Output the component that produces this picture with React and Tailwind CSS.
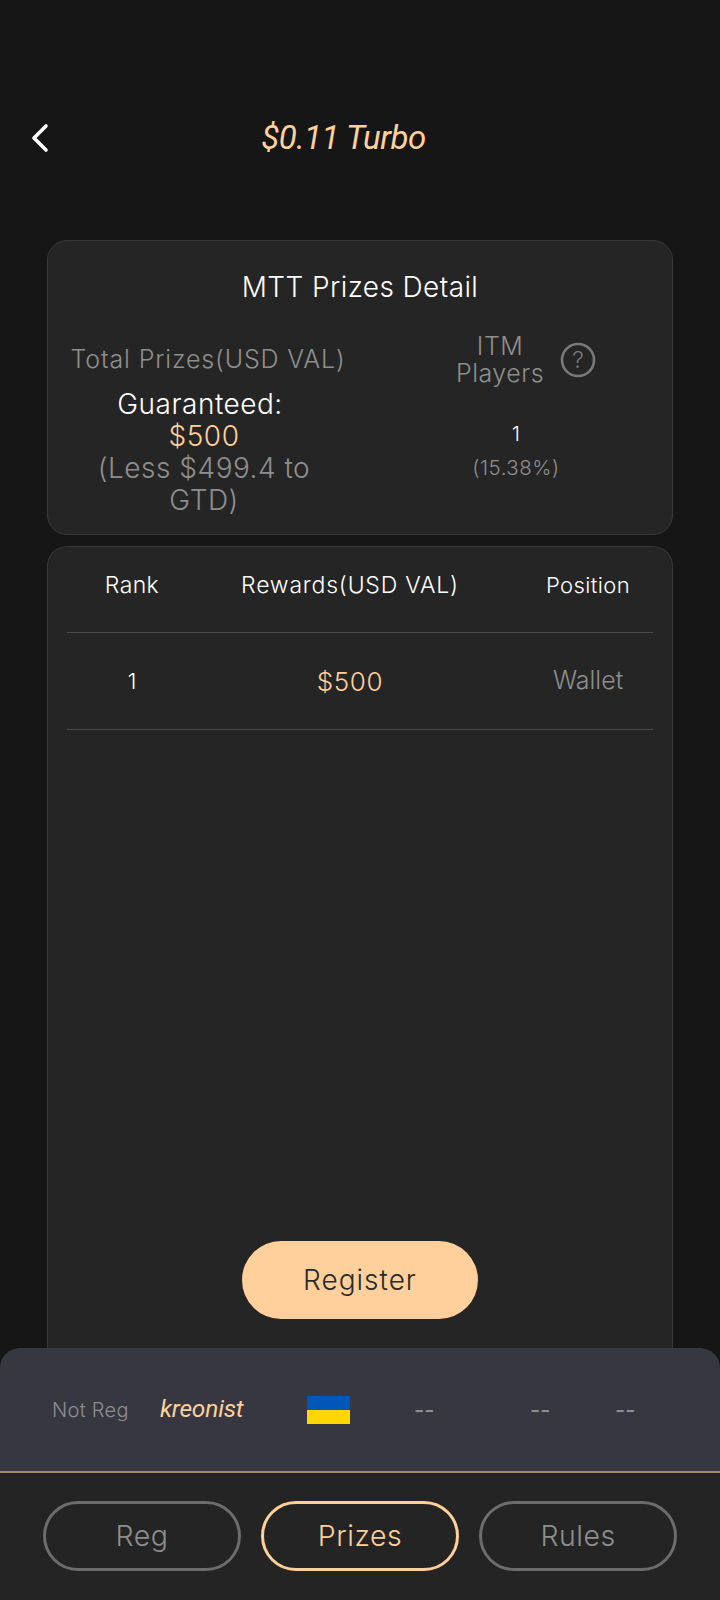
function Tab({ label, active }) {
  return (
    <div
      className={
        active
          ? "w-[198px] h-[70px] rounded-full border-[3px] border-[#ffd09b] flex items-center justify-center text-[28.5px] tracking-[0.5px] text-[#ffd09b]"
          : "w-[198px] h-[70px] rounded-full border-[3px] border-[#6c6c6c] flex items-center justify-center text-[28.5px] tracking-[0.5px] text-[#8e8e8e]"
      }
    >
      {label}
    </div>
  );
}

export default function App() {
  return (
    <div className="w-[720px] h-[1600px] bg-[#161616] flex flex-col overflow-hidden font-['Inter',sans-serif] font-light">
      {/* Header */}
      <div className="h-[240px] shrink-0 pt-[116px]">
        <div className="h-[44px] flex items-center pl-[29px]">
          <svg width="22" height="30" viewBox="0 0 22 30" fill="none" className="shrink-0">
            <path d="M17 3 L5 15 L17 27" stroke="#ffffff" strokeWidth="3.6" strokeLinecap="round" strokeLinejoin="round" />
          </svg>
          <div className="flex-1 text-center pr-[84px] font-['Roboto',sans-serif] italic font-normal text-[33px] tracking-[-0.5px] text-[#ffd09b]">
            $0.11 Turbo
          </div>
        </div>
      </div>

      {/* Summary card */}
      <div className="mx-[47px] h-[295px] shrink-0 rounded-[20px] border border-[#383838] bg-[#252525] flex flex-col">
        <div className="text-center text-white text-[28px] leading-[32px] mt-[30px] tracking-[0.4px]">
          MTT Prizes Detail
        </div>
        <div className="flex mt-[28px]">
          <div className="w-[312px] flex flex-col items-center shrink-0">
            <div className="h-[58px] flex items-center text-[25px] tracking-[0.85px] text-[#8e8e8e] pl-[8px]">
              Total Prizes(USD VAL)
            </div>
            <div className="text-center text-[28px] tracking-[0.5px] leading-[32px] w-[250px] -mt-[1px]">
              <div className="text-white pr-[8px]">Guaranteed:</div>
              <div className="text-[#ffd09b]">$500</div>
              <div className="text-[#8e8e8e]">(Less $499.4 to GTD)</div>
            </div>
          </div>
          <div className="flex-1 flex flex-col">
            <div className="h-[58px] flex items-center pl-[96px] gap-[16px]">
              <div className="text-center text-[25px] tracking-[0.5px] leading-[27px] text-[#8e8e8e]">
                ITM
                <br />
                Players
              </div>
              <svg width="36" height="36" viewBox="0 0 36 36" fill="none" className="shrink-0">
                <circle cx="18" cy="18" r="16" stroke="#7a7a7a" strokeWidth="2.6" />
                <text x="18" y="26" textAnchor="middle" fill="#7a7a7a" fontSize="23" fontFamily="Inter, sans-serif" fontWeight="300">?</text>
              </svg>
            </div>
            <div className="text-center mt-[29px] w-[290px] ml-[11px]">
              <div className="text-white text-[20px] leading-[33px]">1</div>
              <div className="text-[#8e8e8e] text-[20.5px] tracking-[0.5px] leading-[33px]">(15.38%)</div>
            </div>
          </div>
        </div>
      </div>

      {/* Rewards card */}
      <div className="mx-[47px] mt-[11px] flex-1 min-h-0 rounded-t-[20px] border border-b-0 border-[#383838] bg-[#252525] flex flex-col px-[19px]">
        <div className="flex h-[86px] shrink-0 items-center border-b border-[#4b4b4b] text-white text-[22px] tracking-[0.4px] pb-[9px]">
          <div className="w-[130px] text-center text-[23px]">Rank</div>
          <div className="w-[306px] text-center text-[23px] tracking-[0.8px]">Rewards(USD VAL)</div>
          <div className="flex-1 text-center pl-[20px]">Position</div>
        </div>
        <div className="flex h-[97px] shrink-0 items-center border-b border-[#4b4b4b] text-[25px]">
          <div className="w-[130px] text-center text-white text-[22px]">1</div>
          <div className="w-[306px] text-center text-[#ffd09b] text-[26px] tracking-[0.6px]">$500</div>
          <div className="flex-1 text-center text-[#8e8e8e] pl-[20px]">Wallet</div>
        </div>
        <div className="flex-1" />
        <div className="h-[107px] shrink-0">
          <div className="mx-auto w-[236px] h-[78px] rounded-full bg-[#ffd09b] flex items-center justify-center text-[#2a2a2a] text-[28px] tracking-[1px] font-light">
            Register
          </div>
        </div>
      </div>

      {/* Player panel */}
      <div className="h-[123px] shrink-0 rounded-t-[20px] bg-[#373741] flex items-center text-[#8e8e8e]">
        <div className="w-[160px] pl-[52px] text-[20px] tracking-[0.3px]">Not Reg</div>
        <div className="w-[147px] font-['Roboto',sans-serif] italic font-normal text-[24.5px] tracking-[-0.2px] text-[#ffd09b]">
          kreonist
        </div>
        <div className="w-[43px] h-[28px] shrink-0 flex flex-col">
          <div className="h-[14px] bg-[#0057b7]" />
          <div className="h-[14px] bg-[#ffd700]" />
        </div>
        <div className="w-[64px] shrink-0" />
        <div className="w-[116px] shrink-0 text-[22px] font-medium leading-none pt-[1px]">--</div>
        <div className="w-[85px] shrink-0 text-[22px] font-medium leading-none pt-[1px]">--</div>
        <div className="text-[22px] font-medium leading-none pt-[1px]">--</div>
      </div>

      {/* Tabs */}
      <div className="h-[129px] shrink-0 border-t-[2px] border-[#a58d6c] bg-[#242424] flex items-start justify-center gap-[20px] pt-[28px]">
        <Tab label="Reg" />
        <Tab label="Prizes" active />
        <Tab label="Rules" />
      </div>
    </div>
  );
}
